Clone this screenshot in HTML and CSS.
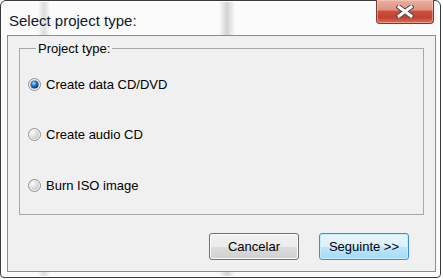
FILE: index.html
```html
<!DOCTYPE html>
<html lang="en">
<head>
    <meta charset="UTF-8">
    <title>Select project type</title>
    <link rel="stylesheet" href="styles.css">
</head>
<body>
    <div class="window">
        <div class="titlebar">
            <span class="title">Select project type:</span>
            <button class="close" type="button" aria-label="Close">
                <svg width="18" height="13" viewBox="0 0 18 13">
                    <path d="M3 2 L15 11 M15 2 L3 11" stroke="#4a4a4a" stroke-width="5" stroke-linecap="square"/>
                    <path d="M3 2 L15 11 M15 2 L3 11" stroke="#fff" stroke-width="3" stroke-linecap="square"/>
                </svg>
            </button>
        </div>

        <div class="client">
            <fieldset class="group">
                <legend>Project type:</legend>

                <label class="option">
                    <svg class="radio" width="13" height="13" viewBox="0 0 13 13">
                        <defs>
                            <radialGradient id="dot" cx="40%" cy="35%" r="65%">
                                <stop offset="0" stop-color="#a6e2ff"/>
                                <stop offset="0.45" stop-color="#2a7fd4"/>
                                <stop offset="1" stop-color="#0b3566"/>
                            </radialGradient>
                        </defs>
                        <circle cx="6.5" cy="6.5" r="6" fill="#f4f4f4" stroke="#8e8f8f"/>
                        <circle cx="6.5" cy="6.5" r="4.6" fill="#d4d9dd"/>
                        <circle cx="6.5" cy="6.5" r="4" fill="url(#dot)"/>
                    </svg>
                    <span>Create data CD/DVD</span>
                </label>

                <label class="option">
                    <svg class="radio" width="13" height="13" viewBox="0 0 13 13">
                        <defs>
                            <radialGradient id="off1" cx="30%" cy="30%" r="80%">
                                <stop offset="0" stop-color="#ffffff"/>
                                <stop offset="1" stop-color="#c4c4c4"/>
                            </radialGradient>
                        </defs>
                        <circle cx="6.5" cy="6.5" r="6" fill="#f4f4f4" stroke="#8e8f8f"/>
                        <circle cx="6.5" cy="6.5" r="4.5" fill="url(#off1)"/>
                    </svg>
                    <span>Create audio CD</span>
                </label>

                <label class="option">
                    <svg class="radio" width="13" height="13" viewBox="0 0 13 13">
                        <circle cx="6.5" cy="6.5" r="6" fill="#f4f4f4" stroke="#8e8f8f"/>
                        <circle cx="6.5" cy="6.5" r="4.5" fill="url(#off1)"/>
                    </svg>
                    <span>Burn ISO image</span>
                </label>
            </fieldset>

            <div class="buttons">
                <button class="btn" type="button">Cancelar</button>
                <button class="btn btn-default" type="button">Seguinte &gt;&gt;</button>
            </div>
        </div>
    </div>
</body>
</html>
```

FILE: styles.css
```css
body {
    margin: 0;
    background-color: #fff;
    font-family: "Liberation Sans", Arial, sans-serif;
}

/* window frame, with the blurred glass streaks */
.window {
    box-sizing: border-box;
    width: 441px;
    height: 278px;
    padding: 0 4px 5px 6px;
    display: flex;
    flex-direction: column;
    border: 1px solid #3a3a3a;
    border-radius: 6px 6px 4px 4px;
    box-shadow: inset 0 0 0 1px #ffffff;
    background-color: #fbfbfb;
    background-image: linear-gradient(90deg,
        transparent 37px, rgba(0, 0, 0, 0.12) 43px, transparent 49px,
        transparent 218px, rgba(0, 0, 0, 0.16) 226px, transparent 234px);
}

.titlebar {
    height: 34px;
    display: flex;
    justify-content: space-between;
    align-items: flex-start;
}

.title {
    padding: 11px 0 0 2px;
    font-size: 15px;
    line-height: 18px;
    color: #0d1a2e;
}

.close {
    width: 58px;
    height: 24px;
    margin: -1px 2px 0 0;
    padding: 0;
    display: flex;
    justify-content: center;
    align-items: center;
    border: 1px solid #7a3a32;
    border-top: none;
    border-radius: 0 0 4px 4px;
    background: linear-gradient(#eab0a2 0%, #df9482 42%, #c9513f 50%, #c3402f 75%, #d8705c 100%);
    box-shadow: inset 0 0 0 1px rgba(255, 210, 200, 0.5);
}

.client {
    flex: 1;
    display: flex;
    flex-direction: column;
    border: 1px solid #8c8c8c;
    background-color: #f0f0f0;
}

/* group box */
.group {
    margin: 5px 11px 0 11px;
    padding: 18px 8px 19px 8px;
    display: flex;
    flex-direction: column;
    gap: 30.5px;
    border: 1px solid #a8a8a8;
}

.group legend {
    margin-left: 8px;
    padding: 0 2px;
    font-size: 13px;
    line-height: 15px;
    color: #000;
}

.option {
    height: 20px;
    display: flex;
    align-items: center;
    gap: 5px;
    font-size: 13px;
    color: #000;
}

.radio {
    flex: none;
}

.buttons {
    margin-top: 18px;
    padding-right: 26px;
    display: flex;
    justify-content: flex-end;
    gap: 20px;
}

.btn {
    width: 90px;
    height: 27px;
    padding: 0;
    font-family: "Liberation Sans", Arial, sans-serif;
    font-size: 13px;
    font-weight: normal;
    color: #000;
    border: 1px solid #707070;
    border-radius: 3px;
    background: linear-gradient(#f2f2f2 0%, #ebebeb 50%, #dddddd 51%, #cfcfcf 100%);
    box-shadow: inset 0 0 0 1px #fcfcfc;
}

.btn-default {
    border-color: #3c8fd0;
    background: linear-gradient(#eaf6fd 0%, #d9f0fc 50%, #bee6fd 51%, #a7d9f5 100%);
    box-shadow: inset 0 0 0 1px #c4ecfc;
}
```
